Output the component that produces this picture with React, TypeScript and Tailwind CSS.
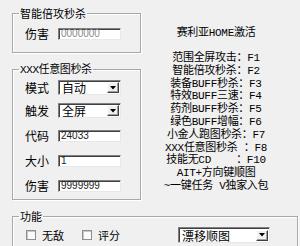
import React from "react";

const cjk = "font-['Noto_Sans_CJK_SC',sans-serif]";
const mix = "font-['Liberation_Mono','Noto_Sans_CJK_SC',monospace]";

function Arrow() {
  return (
    <div className="mr-[1px] flex h-[11px] w-[12px] items-center justify-center border border-t-[#ffffff] border-l-[#ffffff] border-b-[#404040] border-r-[#404040] bg-[#f0f0f0] shadow-[inset_-1px_-1px_0_#a0a0a0]">
      <svg width="6" height="4" viewBox="0 0 6 4">
        <path d="M0 0 H6 L3 3.5 Z" fill="#000" />
      </svg>
    </div>
  );
}

function Select({ text, w, h }: { text: string; w: string; h: string }) {
  return (
    <div
      className={`${w} ${h} flex items-center justify-between bg-white border border-t-[#808080] border-l-[#808080] border-b-[#e8e8e8] border-r-[#e8e8e8] shadow-[inset_1px_1px_0_#404040]`}
    >
      <span className={`${cjk} pl-[3px] text-[12px] leading-[13px] text-black`}>{text}</span>
      <Arrow />
    </div>
  );
}

function Input({ value, gray }: { value: string; gray?: boolean }) {
  return (
    <div className="flex h-[12px] w-[63px] items-center bg-white border border-t-[#808080] border-l-[#808080] border-b-[#e8e8e8] border-r-[#e8e8e8] shadow-[inset_1px_1px_0_#404040]">
      <span
        className={`font-['Liberation_Sans',sans-serif] pl-[2px] text-[10px] leading-[10px] ${gray ? "text-[#8a8a8a]" : "text-[#222]"}`}
      >
        {value}
      </span>
    </div>
  );
}

function Label({ children }: { children: React.ReactNode }) {
  return <span className={`${cjk} w-[33px] text-[12px] leading-[14px] text-black`}>{children}</span>;
}

function Check({ label, w }: { label: string; w: string }) {
  return (
    <div className={`${w} flex items-center`}>
      <div className="h-[10px] w-[10px] bg-[#fafafa] border border-[#8e8e8e] shadow-[inset_1px_1px_0_#c8c8c8]" />
      <span className={`${cjk} ml-[6px] text-[11px] leading-[13px] text-black`}>{label}</span>
    </div>
  );
}

const fs =
  "border border-[#a8a8a8] shadow-[1px_1px_0_#ffffff,inset_1px_1px_0_#ffffff] min-w-0";
const lg = `${cjk} ml-[6px] px-[1px] text-[11px] leading-[14px] text-black`;

export default function App() {
  const lines = [
    "范围全屏攻击：F1",
    "智能倍攻秒杀：F2",
    "装备BUFF秒杀：F3",
    "特效BUFF三速：F4",
    "药剂BUFF秒杀：F5",
    "绿色BUFF增幅：F6",
    "小金人跑图秒杀：F7",
    "XXX任意图秒杀 ：F8",
    "技能无CD    ：F10",
    "AIT+方向键顺图",
    "~一键任务 V独家入包",
  ];
  return (
    <div className="w-[300px] h-[246px] overflow-hidden bg-[#f0f0f0] flex flex-col">
      <div className="flex">
        <div className="ml-[12px] w-[129px] flex flex-col">
          <fieldset className={`${fs} mt-[6px] h-[47px]`}>
            <legend className={lg}>智能倍攻秒杀</legend>
            <div className="mt-[7px] flex items-center pl-[12px]">
              <Label>伤害</Label>
              <Input value="0000000" gray />
            </div>
          </fieldset>
          <fieldset className={`${fs} mt-[8px] h-[139px]`}>
            <legend className={`${lg} tracking-[-0.4px]`}>
              <span className={mix}>XXX</span>任意图秒杀
            </legend>
            <div className="flex flex-col pl-[12px]">
              <div className="mt-[3px] flex items-center">
                <Label>模式</Label>
                <Select text="自动" w="w-[63px]" h="h-[15px]" />
              </div>
              <div className="mt-[8px] flex items-center">
                <Label>触发</Label>
                <Select text="全屏" w="w-[63px]" h="h-[15px]" />
              </div>
              <div className="mt-[11px] flex items-center">
                <Label>代码</Label>
                <Input value="24033" />
              </div>
              <div className="mt-[11px] flex items-center">
                <Label>大小</Label>
                <Input value="1" />
              </div>
              <div className="mt-[11px] flex items-center">
                <Label>伤害</Label>
                <Input value="9999999" />
              </div>
            </div>
          </fieldset>
        </div>
        <div className={`${mix} flex-1 flex flex-col items-center pr-[9px] text-[11px] text-black`}>
          <div className="mt-[27px] leading-[13px] whitespace-pre tracking-[-0.3px]">赛利亚HOME激活</div>
          <div className="mt-[12px] flex flex-col items-center">
            {lines.map((l) => (
              <div key={l} className="leading-[12.8px] whitespace-pre tracking-[-0.3px]">
                {l}
              </div>
            ))}
          </div>
        </div>
      </div>
      <fieldset className={`${fs} ml-[12px] mt-[9px] w-[286px] h-[60px] shrink-0`}>
        <legend className={lg}>功能</legend>
        <div className="mt-[4px] flex h-[16px] items-center pl-[13px]">
          <Check label="无敌" w="w-[56px]" />
          <Check label="评分" w="w-[96px]" />
          <Select text="漂移顺图" w="w-[92px]" h="h-[16px]" />
        </div>
      </fieldset>
    </div>
  );
}
